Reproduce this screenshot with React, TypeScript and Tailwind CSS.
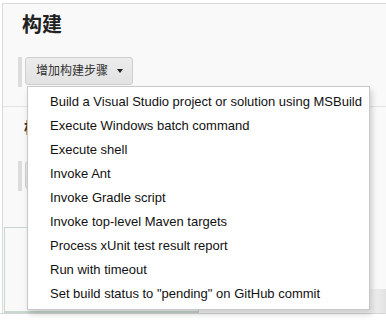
const steps = [
  "Build a Visual Studio project or solution using MSBuild",
  "Execute Windows batch command",
  "Execute shell",
  "Invoke Ant",
  "Invoke Gradle script",
  "Invoke top-level Maven targets",
  "Process xUnit test result report",
  "Run with timeout",
  'Set build status to "pending" on GitHub commit',
]

function AddButton({ label }: { label?: string }) {
  return (
    <div className="flex h-[30px] items-stretch">
      <div className="ml-[15px] w-[4px] bg-[#dcdcdc]" />
      <button className="ml-[3px] flex h-[28px] min-w-[60px] items-center gap-[9px] rounded-[3px] border border-[#cfcfcf] bg-gradient-to-b from-[#ececec] to-[#e2e2e2] pl-[10px] pr-[9px] text-[12px] text-[#333]">
        {label && <span>{label}</span>}
        <span className="h-0 w-0 border-x-[3.5px] border-t-[4px] border-x-transparent border-t-[#222]" />
      </button>
    </div>
  )
}

export default function App() {
  return (
    <div
      className="relative h-[323px] w-[386px] overflow-hidden bg-white"
      style={{ fontFamily: '"Liberation Sans", Arial, "Noto Sans CJK SC", sans-serif' }}
    >
      <div className="ml-[2px] mt-[3px] flex h-[310px] flex-col border-l border-t border-[#dadada] bg-[#f9f9f9]">
        <h2 className="ml-[19px] mt-[6px] h-[30px] text-[20px] font-bold leading-[30px] text-[#222]">构建</h2>
        <div className="mt-[17px]">
          <AddButton label="增加构建步骤" />
        </div>
        <div className="mt-[19px] border-b border-[#e3e3e3]" />
        <div className="ml-[21px] mt-[9px] h-[20px] w-[4px] overflow-hidden">
          <span className="text-[15px] font-bold text-[#333]">构</span>
        </div>
        <div className="mt-[25px]">
          <AddButton />
        </div>
        <div className="mt-[36px] flex flex-1">
          <div className="ml-px w-[195px] border border-b-2 border-[#c7d8cc]" />
          <div className="flex flex-1 items-end justify-end">
            <div className="h-[24px] w-[16px] bg-gradient-to-r from-[#f3f3f3] to-[#e2e2e2]" />
          </div>
        </div>
      </div>
      <div className="border-t border-[#d5d5d5]" />

      <div className="absolute left-[27px] top-[86px] w-[343px] border border-[#c8c8c8] bg-white py-[3px] shadow-[2px_4px_6px_rgba(0,0,0,0.18)]">
        {steps.map((s) => (
          <div key={s} className="flex h-[24px] items-center pl-[22px] text-[13px] text-[#111]">
            {s}
          </div>
        ))}
      </div>
    </div>
  )
}
